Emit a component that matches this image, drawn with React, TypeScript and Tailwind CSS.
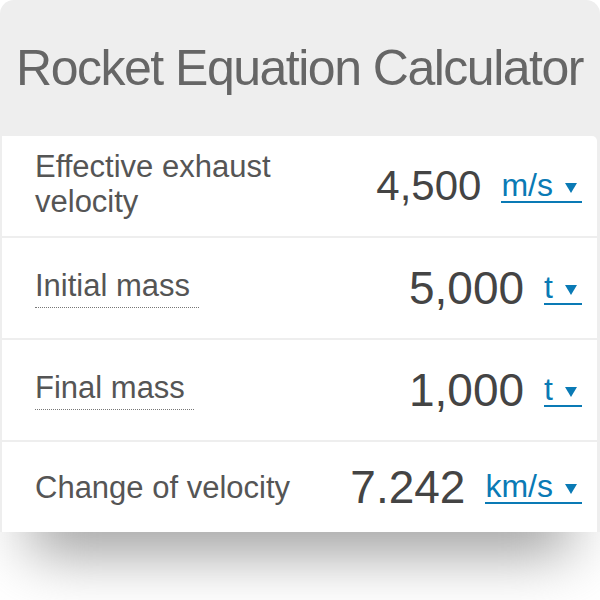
import { FC } from "react";

interface RowProps {
  label: string;
  value: string;
  unit: string;
  dotted?: boolean;
  big?: boolean;
  height: string;
  labelShift?: string;
}

const Caret: FC = () => (
  <svg
    className="ml-[12px] mr-[5px] mt-[5px] shrink-0"
    width="12"
    height="10"
    viewBox="0 0 12 10"
  >
    <path d="M0 0 H12 L6 10 Z" fill="#0a7ab5" />
  </svg>
);

const Row: FC<RowProps> = ({
  label,
  value,
  unit,
  dotted,
  big,
  height,
  labelShift = "",
}) => {
  return (
    <div
      className={`flex items-center justify-between bg-white pl-[33px] pr-[15px] ${height}`}
    >
      <div className={`max-w-[280px] ${labelShift}`}>
        <span
          className={`inline-block text-[31px] leading-[35px] text-[#555] ${
            dotted ? "border-b border-dotted border-[#777] pr-[9px] pb-[4px]" : ""
          }`}
        >
          {label}
        </span>
      </div>
      <div className="flex items-center gap-[20px]">
        <span
          className={`leading-none text-[#444] ${big ? "text-[46px]" : "text-[42px]"}`}
        >
          {value}
        </span>
        <span className="inline-flex items-center border-b-2 border-[#0a7ab5] text-[32px] leading-none text-[#0a7ab5]">
          {unit}
          <Caret />
        </span>
      </div>
    </div>
  );
};

export default function App() {
  return (
    <div className="w-[600px] h-[600px] bg-white font-['Liberation_Sans',Arial,sans-serif]">
      <div className="rounded-t-[14px] bg-[#eeeeee] pl-[2px] pr-[3px]">
        <div className="flex h-[136px] items-center justify-center">
          <h1 className="text-[50px] tracking-[-1.5px] text-[#666]">
            Rocket Equation Calculator
          </h1>
        </div>
        <div className="flex flex-col gap-[2px] overflow-hidden rounded-tr-[5px]">
          <Row
            label="Effective exhaust velocity"
            value="4,500"
            unit="m/s"
            height="h-[100px]"
            labelShift="-mt-[5px]"
          />
          <Row
            label="Initial mass"
            value="5,000"
            unit="t"
            dotted
            big
            height="h-[100px]"
          />
          <Row
            label="Final mass"
            value="1,000"
            unit="t"
            dotted
            big
            height="h-[100px]"
          />
          <Row
            label="Change of velocity"
            value="7.242"
            unit="km/s"
            big
            height="h-[90px]"
          />
        </div>
      </div>
      <div className="h-[68px] overflow-hidden">
        <div className="mx-[30px] -mt-[50px] h-[70px] bg-[#999] blur-[30px]" />
      </div>
    </div>
  );
}
